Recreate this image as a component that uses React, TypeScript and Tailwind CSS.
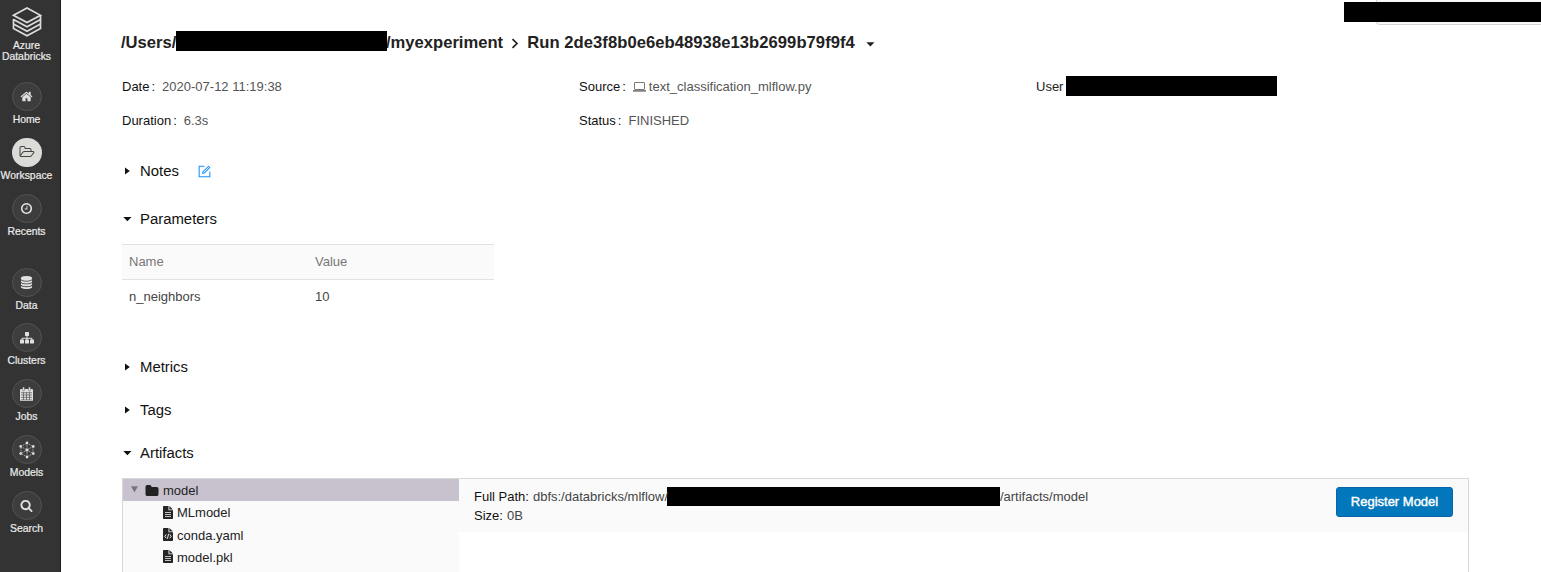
import type { ReactNode } from "react";
import { AiOutlineForm } from "react-icons/ai";

const HOME =
  "M1472 992v480q0 26-19 45t-45 19h-384v-384h-256v384h-384q-26 0-45-19t-19-45v-480q0-1 .5-3t.5-3l575-474 575 474q1 2 1 6zm223-69l-62 74q-8 9-21 11h-3q-13 0-21-7l-692-577-692 577q-12 8-24 7-13-2-21-11l-62-74q-8-10-7-23.5t11-21.5l719-599q32-26 76-26t76 26l244 204v-195q0-14 9-23t23-9h192q14 0 23 9t9 23v408l219 182q10 8 11 21.5t-7 23.5z";
const FOLDER_OPEN =
  "M1717 931q0-35-53-35h-1088q-40 0-85.5 21.5t-71.5 52.5l-294 363q-18 24-18 40 0 35 53 35h1088q40 0 86-22t71-53l294-363q18-22 18-39zm-1141-163h768v-160q0-40-28-68t-68-28h-576q-40 0-68-28t-28-68v-64q0-40-28-68t-68-28h-320q-40 0-68 28t-28 68v853l256-315q44-53 116-87.5t140-34.5zm1269 163q0 62-46 120l-295 363q-43 53-116 87.5t-140 34.5h-1088q-92 0-158-66t-66-158v-960q0-92 66-158t158-66h320q92 0 158 66t66 158v32h544q92 0 158 66t66 158v160h192q54 0 99 24.5t67 70.5q15 32 15 68z";
const CLOCK =
  "M1024 544v448q0 14-9 23t-23 9h-320q-14 0-23-9t-9-23v-64q0-14 9-23t23-9h224v-352q0-14 9-23t23-9h64q14 0 23 9t9 23zm416 352q0-148-73-273t-198-198-273-73-273 73-198 198-73 273 73 273 198 198 273 73 273-73 198-198 73-273zm224 0q0 209-103 385.5t-279.5 279.5-385.5 103-385.5-103-279.5-279.5-103-385.5 103-385.5 279.5-279.5 385.5-103 385.5 103 279.5 279.5 103 385.5z";
const DATABASE =
  "M896 768q237 0 443-43t325-127v170q0 69-103 128t-280 93.5-385 34.5-385-34.5-280-93.5-103-128v-170q119 84 325 127t443 43zm0 768q237 0 443-43t325-127v170q0 69-103 128t-280 93.5-385 34.5-385-34.5-280-93.5-103-128v-170q119 84 325 127t443 43zm0-384q237 0 443-43t325-127v170q0 69-103 128t-280 93.5-385 34.5-385-34.5-280-93.5-103-128v-170q119 84 325 127t443 43zm0-1152q208 0 385 34.5t280 93.5 103 128v128q0 69-103 128t-280 93.5-385 34.5-385-34.5-280-93.5-103-128v-128q0-69 103-128t280-93.5 385-34.5z";
const SEARCH =
  "M1216 832q0-185-131.5-316.5t-316.5-131.5-316.5 131.5-131.5 316.5 131.5 316.5 316.5 131.5 316.5-131.5 131.5-316.5zm512 832q0 52-38 90t-90 38q-54 0-90-38l-343-342q-179 124-399 124-143 0-273.5-55.5t-225-150-150-225-55.5-273.5 55.5-273.5 150-225 225-150 273.5-55.5 273.5 55.5 225 150 150 225 55.5 273.5q0 220-124 399l343 343q37 37 37 90z";
const FOLDER =
  "M1728 608v704q0 92-66 158t-158 66h-1216q-92 0-158-66t-66-158v-960q0-92 66-158t158-66h320q92 0 158 66t66 158v32h672q92 0 158 66t66 158z";

function Glyph({ d, size }: { d: string; size: number }) {
  return (
    <svg width={size} height={size} viewBox="0 0 1792 1792" fill="currentColor" className="overflow-visible">
      <path d={d} />
    </svg>
  );
}

function LogoIcon() {
  return (
    <svg width="30" height="30" viewBox="0 0 30 30" fill="none" stroke="#dcdcdc" strokeWidth="1.700">
      <path d="M1.500 8.300 15 1l13.500 7.300L15 15.500Z" />
      <path d="M1.500 12.500 15 19.700l13.500-7.200V8.300" />
      <path d="M1.500 12v5L15 24.200l13.500-7.200v-4.500" />
      <path d="M1.500 17.500v4L15 28.800l13.500-7.300v-4" />
    </svg>
  );
}

function LaptopIcon() {
  return (
    <svg width="13" height="10" viewBox="0 0 13 10" className="mr-[3px]" fill="none" stroke="#777">
      <rect x="1.500" y=".5" width="10" height="7" rx=".4" strokeWidth="1" />
      <path d="M0 8.900h13" strokeWidth="1.600" />
    </svg>
  );
}

function SitemapIcon() {
  return (
    <svg width="14" height="12" viewBox="0 0 14 12" fill="currentColor">
      <rect x="5" y="0" width="4" height="4" rx=".6" />
      <path d="M6.500 4v1.700H2.600q-1 0-1 1V8h1V6.700h3.900V8h1V6.700h3.900V8h1V6.700q0-1-1-1H7.500V4z" />
      <rect x="0" y="7.600" width="4" height="4" rx=".6" />
      <rect x="5" y="7.600" width="4" height="4" rx=".6" />
      <rect x="10" y="7.600" width="4" height="4" rx=".6" />
    </svg>
  );
}

function CalendarIcon() {
  return (
    <svg width="13" height="14" viewBox="0 0 13 14">
      <rect x="0" y="2" width="13" height="12" rx="1" fill="currentColor" />
      <path d="M1 5.700h11M1 8h11M1 10.400h11M1 12.900h11M3.500 5.500V13M6.500 5.500V13M9.500 5.500V13" stroke="#3d3d3d" strokeWidth=".6" />
      <rect x="2.500" y="0" width="2" height="4" rx=".9" fill="currentColor" stroke="#3d3d3d" strokeWidth=".4" />
      <rect x="8.500" y="0" width="2" height="4" rx=".9" fill="currentColor" stroke="#3d3d3d" strokeWidth=".4" />
    </svg>
  );
}

function ModelsIcon() {
  return (
    <svg width="16" height="18" viewBox="0 0 16 18" fill="currentColor">
      <path
        d="M8 2 14 5.500v7L8 16 2 12.500v-7ZM8 2v14M2 5.500l12 7M14 5.500l-12 7"
        fill="none"
        stroke="currentColor"
        strokeWidth=".6"
        strokeDasharray="1.600 .7"
      />
      <circle cx="8" cy="1.900" r="1.300" />
      <circle cx="14.300" cy="5.400" r="1.300" />
      <circle cx="14.300" cy="12.600" r="1.300" />
      <circle cx="8" cy="16.100" r="1.300" />
      <circle cx="1.700" cy="12.600" r="1.300" />
      <circle cx="1.700" cy="5.400" r="1.300" />
      <circle cx="8" cy="9" r="1.500" />
    </svg>
  );
}

function FileIcon({ code = false }: { code?: boolean }) {
  return (
    <svg width="10" height="13" viewBox="0 0 10 13">
      <path d="M.7 0H5.500v4.200H10v8.100q0 .7-.7.7H.7Q0 13 0 12.300V.7Q0 0 .7 0Z" fill="#252525" />
      <path d="M6.400.1 9.900 3.400H6.400Z" fill="#252525" />
      {code ? (
        <path d="M3.200 6.400 1.800 8.300l1.400 1.900M6.800 6.400l1.400 1.900-1.400 1.900M5.600 5.800l-1.200 5" fill="none" stroke="#fafafa" strokeWidth=".95" />
      ) : (
        <path d="M2 6.500h6M2 8.500h6M2 10.500h6" stroke="#d5d5d5" strokeWidth=".9" />
      )}
    </svg>
  );
}

function NavItem({ label, active = false, children }: { label: string; active?: boolean; children: ReactNode }) {
  return (
    <a className="flex h-[45px] flex-col items-center">
      <span
        className={
          active
            ? "flex size-[30px] items-center justify-center rounded-full bg-[#dbdbd7] text-[#444]"
            : "flex size-[30px] items-center justify-center rounded-full border border-[#535353] bg-[#3d3d3d] text-[#e0e0e0]"
        }
      >
        {children}
      </span>
      <span className="mt-[2px] text-[10.400px] leading-[14px] whitespace-nowrap [-webkit-text-stroke:0.2px_#ececec]">{label}</span>
    </a>
  );
}

function Sidebar() {
  return (
    <nav className="h-full w-[61px] shrink-0 border-r border-[#1c1c1c] bg-[#333] text-[#ececec]">
      <div className="flex w-[53px] flex-col items-center">
        <div className="mt-[7px] flex h-[74.500px] flex-col items-center">
          <LogoIcon />
          <div className="mt-[3px] text-center text-[10.400px] leading-[11px] [-webkit-text-stroke:0.2px_#ececec]">
            Azure
            <br />
            Databricks
          </div>
        </div>
        <div className="flex w-[54px] flex-col gap-[11px]">
          <NavItem label="Home"><Glyph d={HOME} size={13} /></NavItem>
          <NavItem label="Workspace" active><Glyph d={FOLDER_OPEN} size={14} /></NavItem>
          <NavItem label="Recents"><Glyph d={CLOCK} size={13} /></NavItem>
        </div>
        <div className="mt-[29px] flex w-[54px] flex-col gap-[10.850px]">
          <NavItem label="Data"><Glyph d={DATABASE} size={13} /></NavItem>
          <NavItem label="Clusters"><SitemapIcon /></NavItem>
          <NavItem label="Jobs"><CalendarIcon /></NavItem>
          <NavItem label="Models"><ModelsIcon /></NavItem>
          <NavItem label="Search"><Glyph d={SEARCH} size={13} /></NavItem>
        </div>
      </div>
    </nav>
  );
}

function Section({ title, open = false, children }: { title: string; open?: boolean; children?: ReactNode }) {
  return (
    <div className="flex h-5 items-center text-[14.900px] leading-5 text-[#111]">
      <span className="flex w-[18px] shrink-0">
        <svg width="10" height="8" viewBox="0 0 10 8" fill="#111">
          {open ? <path d="M1.300 2h8.200L5.400 6.200Z" /> : <path d="M3 0.400 7.800 4 3 7.600Z" />}
        </svg>
      </span>
      {title}
      {children}
    </div>
  );
}

function Field({ label, children }: { label: string; children: ReactNode }) {
  return (
    <div className="flex h-5 w-[457px] items-center">
      <span className="text-[#111]">{label}</span>
      <span className="ml-[2px] mr-[7px] text-[#111]">:</span>
      <span className="flex items-center text-[#555]">{children}</span>
    </div>
  );
}

const files = [
  { name: "MLmodel", code: false },
  { name: "conda.yaml", code: true },
  { name: "model.pkl", code: false },
];

export default function App() {
  return (
    <div
      className="relative flex h-[572px] w-[1541px] overflow-hidden bg-white text-[13px] leading-5 text-[#444]"
      style={{ fontFamily: '"Liberation Sans", Arial, sans-serif' }}
    >
      <Sidebar />
      <main className="flex min-w-0 flex-1 flex-col pl-[61px]">
        <h1 className="-ml-px mt-[32px] flex h-[22px] items-center text-[16.600px] leading-[22px] font-bold whitespace-nowrap text-[#222]">
          <span className="w-[55px]">/Users/</span>
          <span className="h-[20px] w-[211px] -translate-y-[2px] bg-black" />
          <span className="-ml-px">/myexperiment</span>
          <svg width="8" height="11" viewBox="0 0 8 11" className="mt-[1px] mr-[8px] ml-[8px]" fill="none" stroke="#222" strokeWidth="1.700">
            <path d="M1.500 1.200 6 5.500 1.500 9.800" />
          </svg>
          <span className="tracking-[0.060px]">Run 2de3f8b0e6eb48938e13b2699b79f9f4</span>
          <svg width="9" height="5" viewBox="0 0 9 5" className="mt-[3px] ml-[11px]" fill="#222">
            <path d="M.3.300h8.200L4.400 4.500Z" />
          </svg>
        </h1>

        <div className="mt-[23px] flex">
          <Field label="Date">2020-07-12 11:19:38</Field>
          <Field label="Source">
            <LaptopIcon />
            text_classification_mlflow.py
          </Field>
          <div className="flex h-5 items-center text-[#222]">
            User
            <span className="ml-[3px] h-[20px] w-[211px] -translate-y-px bg-black" />
          </div>
        </div>
        <div className="mt-[14px] flex">
          <Field label="Duration">6.3s</Field>
          <Field label="Status">FINISHED</Field>
        </div>

        <div className="mt-[30px]">
          <Section title="Notes">
            <AiOutlineForm className="ml-[18px] size-[15px] text-[#1890ff]" />
          </Section>
        </div>
        <div className="mt-[28px]">
          <Section title="Parameters" open />
        </div>
        <table className="mt-[15px] w-[372px] table-fixed border-collapse text-left">
          <thead>
            <tr className="h-[35px] border-y border-[#e2e2e2] bg-[#fafafa] text-[#777]">
              <th className="w-1/2 px-[7px] py-0 font-normal">Name</th>
              <th className="w-1/2 px-[7px] py-0 font-normal">Value</th>
            </tr>
          </thead>
          <tbody>
            <tr className="h-[34px]">
              <td className="px-[7px] py-0">n_neighbors</td>
              <td className="px-[7px] py-0">10</td>
            </tr>
          </tbody>
        </table>
        <div className="mt-[43px] flex flex-col gap-[23px]">
          <Section title="Metrics" />
          <Section title="Tags" />
          <Section title="Artifacts" open />
        </div>

        <div className="mt-[15px] flex h-[120px] w-[1347px] shrink-0 border border-[#d8d8d8]">
          <div className="w-[336px] shrink-0 bg-[#fafafa] text-[#222]">
            <div className="flex h-[22.500px] items-center bg-[#c8c2ce]">
              <svg width="7" height="7" viewBox="0 0 7 7" className="ml-[8px]" fill="#777">
                <path d="M0 .3h7L3.500 6.500Z" />
              </svg>
              <span className="ml-[7px] flex w-[18px] translate-y-px"><Glyph d={FOLDER} size={14} /></span>
              <span className="translate-y-px">model</span>
            </div>
            {files.map((file) => (
              <div key={file.name} className="flex h-[22.350px] items-center gap-[4px] pl-[40px]">
                <FileIcon code={file.code} />
                <span className="translate-y-px">{file.name}</span>
              </div>
            ))}
          </div>
          <div className="flex-1">
            <div className="flex h-[53px] justify-between bg-[#fafafa] pt-[8px] pr-[15px] pl-[15px]">
              <div className="leading-5">
                <div className="flex h-[19px] items-center whitespace-nowrap">
                  <span className="mr-[4px] translate-y-px text-[#111]">Full Path:</span>
                  <span className="w-[134px] translate-y-px">dbfs:/databricks/mlflow/</span>
                  <span className="h-[19px] w-[333px] bg-black" />
                  <span className="translate-y-px">/artifacts/model</span>
                </div>
                <div className="flex h-5 items-center">
                  <span className="mr-[4px] text-[#111]">Size:</span>0B
                </div>
              </div>
              <button className="h-[30px] w-[117px] rounded-[3px] border border-[#0c62ab] bg-[#0377bb] text-[13px] leading-5 font-normal text-white [-webkit-text-stroke:0.4px_white]">
                Register Model
              </button>
            </div>
          </div>
        </div>
      </main>
      <div className="absolute top-0 right-0 h-[25px] w-[165px] rounded-bl-[4px] border-b border-l border-[#d4d4d4] bg-[#f8f8f8]" />
      <div className="absolute top-[2px] right-0 h-[20px] w-[197px] bg-black" />
    </div>
  );
}
